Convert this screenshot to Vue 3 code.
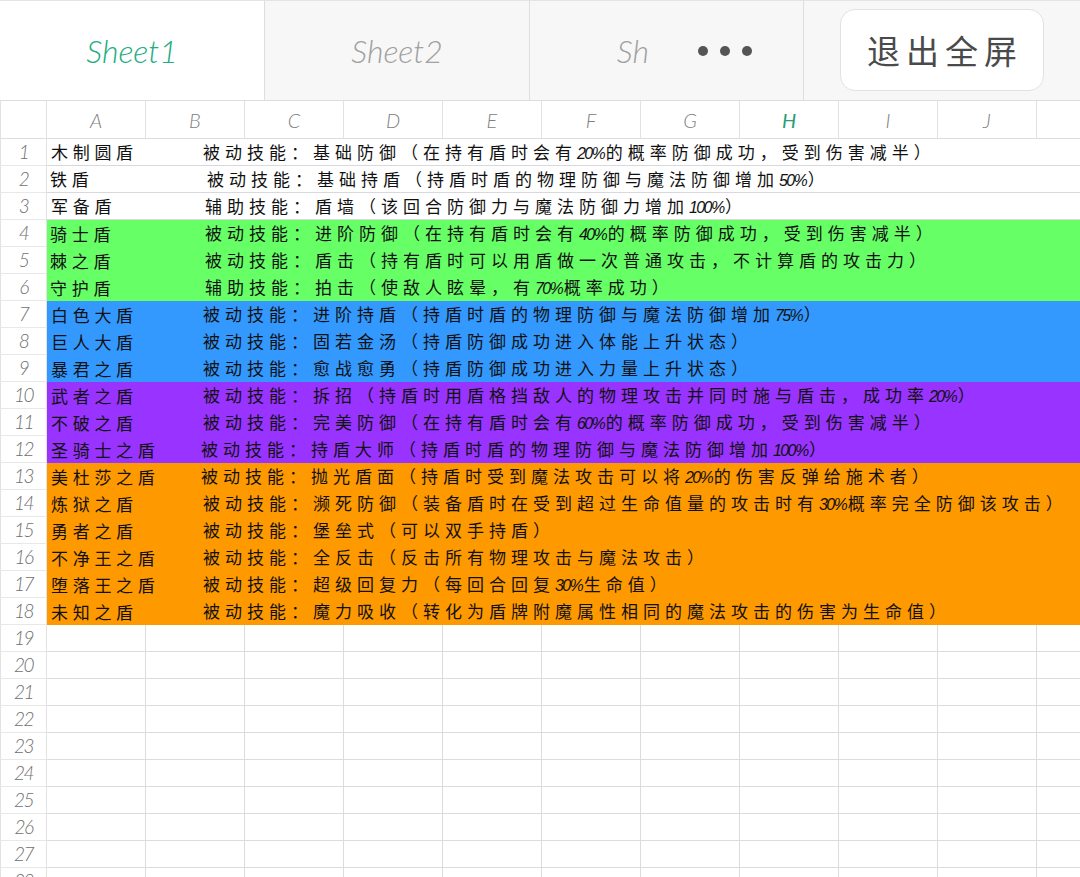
<template>
  <div class="sheet-page">
    <div class="tab-bar">
      <div class="tab active"><span>Sheet1</span></div>
      <div class="tab"><span>Sheet2</span></div>
      <div class="tab tab-clipped">
        <span>Sheet3</span>
        <div class="more-mask">
          <i></i><i></i><i></i>
        </div>
      </div>
      <div class="tab-action">
        <button class="exit-btn">退出全屏</button>
      </div>
    </div>

    <div class="col-header">
      <div class="corner"></div>
      <div
        v-for="col in columns"
        :key="col"
        class="col-cell"
        :class="{ current: col === 'H' }"
      >
        {{ col }}
      </div>
      <div class="col-cell"></div>
    </div>

    <div v-for="(row, index) in rows" :key="index" class="row">
      <div class="row-head">{{ index + 1 }}</div>
      <div class="row-body" :class="row.band">
        <div class="name-cell" :style="{ paddingLeft: row.nameX - 47 + 'px' }">{{ row.name }}</div>
        <div class="skill-cell" :style="{ left: row.skillX - 47 + 'px' }">
          <span
            v-for="(seg, i) in split(row.skill)"
            :key="i"
            :class="{ num: seg.num }"
          >{{ seg.text }}</span>
        </div>
      </div>
    </div>

    <div v-for="n in 10" :key="'empty' + n" class="row empty">
      <div class="row-head">{{ n + 18 }}</div>
      <div v-for="c in 11" :key="c" class="empty-cell"></div>
    </div>
  </div>
</template>

<script setup>
const columns = ['A', 'B', 'C', 'D', 'E', 'F', 'G', 'H', 'I', 'J']

const rows = [
  { name: '木制圆盾', skill: '被动技能：基础防御（在持有盾时会有20%的概率防御成功，受到伤害减半）', nameX: 51, skillX: 203, band: 'plain' },
  { name: '铁盾', skill: '被动技能：基础持盾（持盾时盾的物理防御与魔法防御增加50%）', nameX: 50, skillX: 207, band: 'plain' },
  { name: '军备盾', skill: '辅助技能：盾墙（该回合防御力与魔法防御力增加100%）', nameX: 51, skillX: 205, band: 'plain' },
  { name: '骑士盾', skill: '被动技能：进阶防御（在持有盾时会有40%的概率防御成功，受到伤害减半）', nameX: 50, skillX: 205, band: 'green' },
  { name: '棘之盾', skill: '被动技能：盾击（持有盾时可以用盾做一次普通攻击，不计算盾的攻击力）', nameX: 50, skillX: 205, band: 'green' },
  { name: '守护盾', skill: '辅助技能：拍击（使敌人眩晕，有70%概率成功）', nameX: 50, skillX: 205, band: 'green' },
  { name: '白色大盾', skill: '被动技能：进阶持盾（持盾时盾的物理防御与魔法防御增加75%）', nameX: 51, skillX: 203, band: 'blue' },
  { name: '巨人大盾', skill: '被动技能：固若金汤（持盾防御成功进入体能上升状态）', nameX: 51, skillX: 203, band: 'blue' },
  { name: '暴君之盾', skill: '被动技能：愈战愈勇（持盾防御成功进入力量上升状态）', nameX: 51, skillX: 203, band: 'blue' },
  { name: '武者之盾', skill: '被动技能：拆招（持盾时用盾格挡敌人的物理攻击并同时施与盾击，成功率20%）', nameX: 51, skillX: 203, band: 'purple' },
  { name: '不破之盾', skill: '被动技能：完美防御（在持有盾时会有60%的概率防御成功，受到伤害减半）', nameX: 51, skillX: 203, band: 'purple' },
  { name: '圣骑士之盾', skill: '被动技能：持盾大师（持盾时盾的物理防御与魔法防御增加100%）', nameX: 51, skillX: 201, band: 'purple' },
  { name: '美杜莎之盾', skill: '被动技能：抛光盾面（持盾时受到魔法攻击可以将20%的伤害反弹给施术者）', nameX: 51, skillX: 201, band: 'orange' },
  { name: '炼狱之盾', skill: '被动技能：濒死防御（装备盾时在受到超过生命值量的攻击时有30%概率完全防御该攻击）', nameX: 51, skillX: 203, band: 'orange' },
  { name: '勇者之盾', skill: '被动技能：堡垒式（可以双手持盾）', nameX: 51, skillX: 203, band: 'orange' },
  { name: '不净王之盾', skill: '被动技能：全反击（反击所有物理攻击与魔法攻击）', nameX: 51, skillX: 203, band: 'orange' },
  { name: '堕落王之盾', skill: '被动技能：超级回复力（每回合回复30%生命值）', nameX: 51, skillX: 203, band: 'orange' },
  { name: '未知之盾', skill: '被动技能：魔力吸收（转化为盾牌附魔属性相同的魔法攻击的伤害为生命值）', nameX: 51, skillX: 203, band: 'orange' },
]

// digits and % are set tighter than the CJK text
function split(text) {
  return text.split(/(\d+%)/).filter(Boolean).map((part) => ({
    text: part,
    num: /^\d+%$/.test(part),
  }))
}
</script>

<style>
html,
body {
  margin: 0;
  background: #fff;
}
</style>

<style scoped>
.sheet-page {
  width: 1080px;
  height: 877px;
  overflow: hidden;
  background: #fff;
  font-family: "Noto Sans CJK SC", "Noto Sans", sans-serif;
}

.tab-bar {
  display: flex;
  height: 100px;
  box-sizing: border-box;
  border-top: 1px solid #e4e4e4;
  background: #f7f7f7;
}

.tab {
  width: 264px;
  flex: none;
  display: flex;
  align-items: center;
  justify-content: center;
  border-right: 1px solid #dedede;
  color: #a0a0a0;
  font-family: Lato, "Liberation Sans", sans-serif;
  font-style: italic;
  font-size: 32px;
  font-weight: 300;
}

.tab.active {
  background: #fff;
  color: #22ad80;
}

.tab-clipped {
  width: 265px;
  padding-right: 8px;
  position: relative;
}

.more-mask {
  position: absolute;
  left: 120px;
  right: 0;
  top: 0;
  bottom: 0;
  padding-left: 48px;
  display: flex;
  align-items: center;
  gap: 12px;
  background: #f7f7f7;
}

.more-mask i {
  width: 10px;
  height: 10px;
  border-radius: 50%;
  background: #555;
}

.tab-action {
  flex: 1;
  padding: 8px 36px;
}

.exit-btn {
  width: 204px;
  height: 82px;
  box-sizing: border-box;
  border: 1px solid #e2e2e2;
  border-radius: 15px;
  background: #fff;
  color: #4a4a4a;
  font-family: inherit;
  font-size: 33px;
  letter-spacing: 6px;
  padding: 0 0 0 6px;
}

.col-header {
  display: grid;
  grid-template-columns: 47px repeat(11, 99px);
  height: 39px;
  box-sizing: border-box;
  border-top: 1px solid #dedede;
  border-bottom: 1px solid #dedede;
}

.corner,
.col-cell {
  border-right: 1px solid #e2e2e2;
  box-sizing: border-box;
}

.corner {
  border-left: 1px solid #e2e2e2;
}

.col-cell {
  display: flex;
  align-items: center;
  justify-content: center;
  color: #808080;
  font-family: Lato, "Liberation Sans", sans-serif;
  font-style: italic;
  font-size: 20px;
  font-weight: 300;
}

.col-cell.current {
  color: #2a9d78;
  font-weight: 400;
}

.row {
  display: flex;
  height: 27px;
}

.row-head {
  width: 47px;
  flex: none;
  box-sizing: border-box;
  display: flex;
  align-items: center;
  justify-content: center;
  padding-bottom: 2px;
  border-left: 1px solid #e2e2e2;
  border-right: 1px solid #e2e2e2;
  border-bottom: 1px solid #e8e8e8;
  color: #6f6f6f;
  font-family: Lato, "Liberation Sans", sans-serif;
  font-style: italic;
  font-size: 19px;
  font-weight: 300;
  letter-spacing: -1.5px;
}

.row-body {
  flex: 1;
  position: relative;
  display: flex;
  align-items: center;
  box-sizing: border-box;
  color: #111;
  font-size: 17px;
  letter-spacing: 5px;
  white-space: nowrap;
}

.row-body.plain {
  border-bottom: 1px solid #d8d8de;
}

.row-body.green {
  background: #66ff66;
}

.row-body.blue {
  background: #3399ff;
}

.row-body.purple {
  background: #9933ff;
}

.row-body.orange {
  background: #ff9900;
}

.name-cell {
  line-height: 26px;
  letter-spacing: 4.7px;
}

/* skill text overflows across the empty cells, like a long cell value */
.skill-cell {
  position: absolute;
  top: 0;
  line-height: 26px;
}

.num {
  font-family: "Liberation Sans", sans-serif;
  font-style: italic;
  font-size: 16px;
  letter-spacing: -1.6px;
  margin-right: 1.5px;
}

.empty-cell {
  width: 99px;
  flex: none;
  box-sizing: border-box;
  border-right: 1px solid #dcdcdc;
  border-bottom: 1px solid #dcdcdc;
}
</style>
